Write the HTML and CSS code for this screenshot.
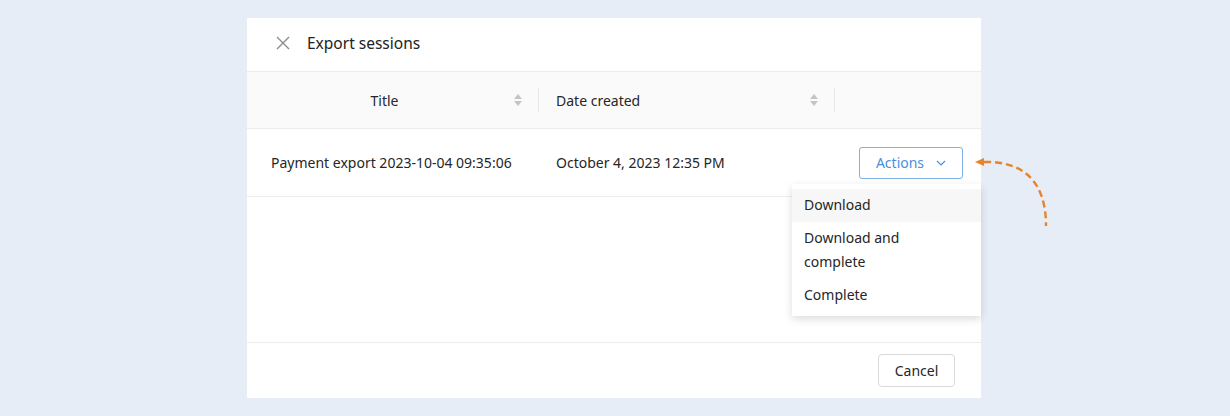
FILE: index.html
```html
<!DOCTYPE html>
<html lang="en">
<head>
    <meta charset="UTF-8">
    <meta name="viewport" content="width=device-width, initial-scale=1.0">
    <title>Export sessions</title>
    <link rel="stylesheet" href="styles.css">
</head>
<body>
    <div class="modal">
        <div class="modal-header">
            <span class="close">
                <svg width="14" height="14" viewBox="0 0 14 14"><path d="M1 1L13 13M13 1L1 13" stroke="#8c8c8c" stroke-width="1.4" fill="none"/></svg>
            </span>
            <span class="modal-title">Export sessions</span>
        </div>

        <div class="table">
            <div class="thead">
                <div class="th col-title">
                    <span class="th-label centered">Title</span>
                    <span class="sorter"><i class="up"></i><i class="down"></i></span>
                </div>
                <div class="th col-date">
                    <span class="th-label">Date created</span>
                    <span class="sorter"><i class="up"></i><i class="down"></i></span>
                </div>
                <div class="th col-actions"></div>
            </div>
            <div class="tr">
                <div class="td col-title">Payment export 2023-10-04 09:35:06</div>
                <div class="td col-date">October 4, 2023 12:35 PM</div>
                <div class="td col-actions">
                    <button class="btn-actions">Actions
                        <svg width="10" height="6" viewBox="0 0 10 6"><path d="M1 1L5 5L9 1" stroke="#4a8fdd" stroke-width="1.2" fill="none"/></svg>
                    </button>
                    <ul class="dropdown">
                        <li class="active">Download</li>
                        <li>Download and<br>complete</li>
                        <li>Complete</li>
                    </ul>
                </div>
            </div>
            <div class="table-empty"></div>
        </div>

        <div class="modal-footer">
            <button class="btn">Cancel</button>
        </div>
    </div>

    <!-- pointer towards the actions button -->
    <svg class="hint-arrow" width="90" height="80" viewBox="0 0 90 80">
        <path d="M14 14C50 13 76 30 76 78" stroke="#e8832a" stroke-width="2.4" stroke-dasharray="7 4" fill="none"/>
        <path d="M5 14L14 10L14 18Z" fill="#e8832a"/>
    </svg>
</body>
</html>
```

FILE: styles.css
```css
body {
    margin: 0;
    padding: 18px 0 0 247px;
    height: 416px;
    box-sizing: border-box;
    background-color: #e6edf7;
    font-family: "Noto Sans", Arial, sans-serif;
    font-size: 14px;
    color: #262626;
    display: flex;
    align-items: flex-start;
}
.modal {
    width: 734px;
    background-color: white;
    display: flex;
    flex-direction: column;
}
.modal-header {
    height: 54px;
    box-sizing: border-box;
    border-bottom: 1px solid #ececec;
    display: flex;
    align-items: center;
    padding: 0 0 3px 29px;
}
.close {
    display: flex;
    margin-right: 17px;
}
.modal-title {
    font-size: 15.5px;
    color: #222;
}
.table {
    display: flex;
    flex-direction: column;
}
.thead, .tr {
    display: flex;
}
.thead {
    height: 57px;
    background-color: #fafafa;
    border-bottom: 1px solid #ececec;
    box-sizing: border-box;
}
.col-title {
    width: 291px;
}
.col-date {
    width: 296px;
}
.col-actions {
    flex: 1;
}
.th {
    display: flex;
    align-items: center;
    padding: 0 16px 0 18px;
    box-sizing: border-box;
    position: relative;
}
.th.col-title {
    padding-left: 14px;
}
.th + .th::before {
    content: "";
    position: absolute;
    left: 0;
    top: 16px;
    height: 24px;
    border-left: 1px solid #e8e8e8;
}
.th-label {
    flex: 1;
}
.th-label.centered {
    text-align: center;
}
.sorter {
    display: flex;
    flex-direction: column;
    gap: 2px;
    margin-left: 6px;
}
.sorter i {
    width: 0;
    height: 0;
    border-left: 4px solid transparent;
    border-right: 4px solid transparent;
}
.sorter .up {
    border-bottom: 5px solid #c4c4c4;
}
.sorter .down {
    border-top: 5px solid #c4c4c4;
}
.tr {
    height: 68px;
    border-bottom: 1px solid #ececec;
    box-sizing: border-box;
}
.td {
    display: flex;
    align-items: center;
    box-sizing: border-box;
}
.td.col-title {
    padding-left: 24px;
}
.td.col-date {
    padding-left: 18px;
}
.td.col-actions {
    justify-content: flex-end;
    padding-right: 18px;
    position: relative;
}
.btn-actions {
    width: 104px;
    height: 32px;
    border: 1px solid #7fb0e6;
    border-radius: 3px;
    background-color: white;
    color: #4a8fdd;
    font-family: inherit;
    font-size: 14px;
    display: flex;
    align-items: center;
    justify-content: center;
    gap: 12px;
    padding: 0;
}
.dropdown {
    position: absolute;
    top: 55px;
    right: 0;
    width: 189px;
    margin: 0;
    padding: 5px 0 4px;
    list-style: none;
    background-color: white;
    box-shadow: 0 3px 8px rgba(0,0,0,0.14);
    z-index: 2;
}
.dropdown li {
    padding: 4px 12px 5px;
    line-height: 24px;
}
.dropdown li.active {
    background-color: #f7f7f7;
}
.table-empty {
    height: 145px;
    border-bottom: 1px solid #ececec;
}
.modal-footer {
    height: 55px;
    display: flex;
    align-items: center;
    justify-content: flex-end;
    padding-right: 26px;
}
.btn {
    width: 77px;
    height: 33px;
    border: 1px solid #d9d9d9;
    border-radius: 4px;
    background-color: white;
    font-family: inherit;
    font-size: 14px;
    color: #262626;
}
.hint-arrow {
    position: absolute;
    left: 970px;
    top: 148px;
}
```
